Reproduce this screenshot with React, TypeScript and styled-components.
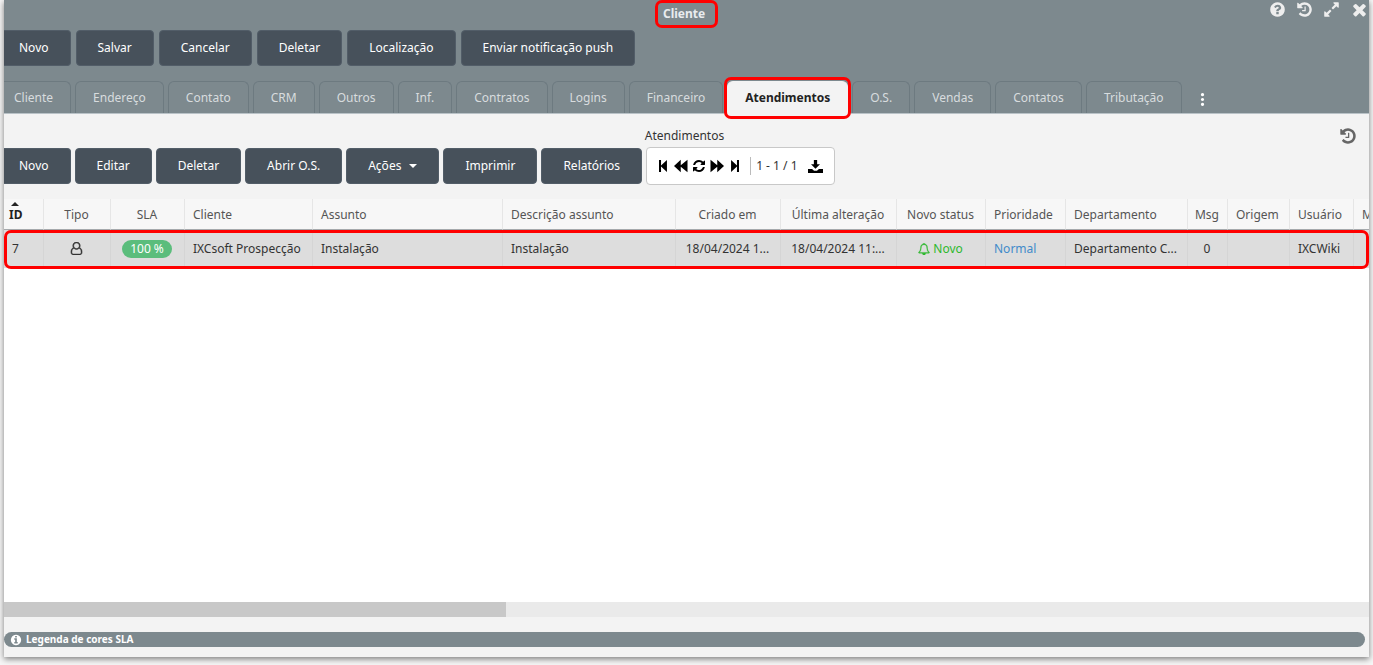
import React from 'react';
import styled, { createGlobalStyle, css } from 'styled-components';

const GlobalStyle = createGlobalStyle`
  * { box-sizing: border-box; }
  body {
    margin: 0;
    background: #f6f6f6;
    color: #333;
    font-family: "Noto Sans", "Open Sans", sans-serif;
    font-size: 12px;
    line-height: 16px;
    overflow: hidden;
  }
  button { font: inherit; border: 0; margin: 0; cursor: pointer; }
`;

const Page = styled.div`
  display: flex;
  min-height: 100vh;
  padding: 0 4px 8px;
`;

const Window = styled.main`
  flex: 1;
  min-width: 0;
  display: flex;
  flex-direction: column;
  background: #f3f3f3;
  box-shadow: 0 2px 6px rgba(0, 0, 0, 0.5);
`;

const Header = styled.header`
  background: #7d898e;
  border-bottom: 1px solid #b9c2c7;
`;

const TitleBar = styled.div`
  display: grid;
  grid-template-columns: 1fr auto 1fr;
  height: 30px;
  align-items: start;
`;

const Title = styled.h1`
  grid-column: 2;
  margin: 0;
  width: 63px;
  height: 28px;
  padding: 3px 5px;
  border: 3px solid #f00;
  border-radius: 7px;
  color: #e9ecee;
  font-size: 12px;
  line-height: 16px;
  white-space: nowrap;
`;

const WindowActions = styled.div`
  display: flex;
  justify-content: flex-end;
  gap: 10px;
`;

const IconButton = styled.button<{ $tone?: string }>`
  display: flex;
  align-items: center;
  justify-content: center;
  padding: 0;
  background: none;
  color: ${(p) => p.$tone || '#eee'};
`;

const Toolbar = styled.div<{ $gap?: number }>`
  display: flex;
  gap: ${(p) => p.$gap || 4}px;
  align-items: center;
`;

const ActionButton = styled.button`
  display: flex;
  align-items: center;
  gap: 8px;
  height: 36px;
  padding: 0 21px;
  border: 1px solid #525d68;
  border-radius: 4px;
  background: #47515b;
  color: #fff;
  white-space: nowrap;
  &:first-child {
    padding-left: 15px;
    border-left: 0;
    border-radius: 0 4px 4px 0;
  }
`;

const Caret = styled.span`
  border: 4px solid transparent;
  border-top-color: currentColor;
  border-bottom: 0;
`;

const Tabs = styled.nav`
  display: flex;
  gap: 4px;
  margin-top: 15px;
  height: 32px;
`;

const Tab = styled.button<{ $active?: boolean }>`
  position: relative;
  padding: 0 17px;
  border: 1px solid #6d7a80;
  border-bottom: 0;
  border-radius: 6px 6px 0 0;
  background: none;
  color: #d8dcde;
  white-space: nowrap;
  &:first-child {
    padding-left: 10px;
    border-left: 0;
    border-top-left-radius: 0;
  }
  ${(p) =>
    p.$active &&
    css`
      height: 33px;
      background: #f3f3f3;
      border-color: #f3f3f3;
      color: #222;
      font-weight: 700;
      &::after {
        content: '';
        position: absolute;
        inset: -5px -4px;
        border: 3px solid #f00;
        border-radius: 7px;
      }
    `}
`;

const MoreButton = styled(IconButton)`
  width: 34px;
  padding-top: 4px;
`;

const SubHeader = styled.div`
  display: grid;
  grid-template-columns: 1fr auto 1fr;
  align-items: center;
  height: 33px;
  padding: 10px 12px 0 8px;
`;

const SubTitle = styled.h2`
  grid-column: 2;
  margin: 0;
  font-size: 12px;
  font-weight: 400;
  line-height: 16px;
`;

const SubAction = styled.div`
  display: flex;
  justify-content: flex-end;
`;

const Pager = styled.div`
  display: flex;
  align-items: center;
  gap: 4px;
  height: 38px;
  padding: 0 11px 0 9px;
  border: 1px solid #c8c8c8;
  border-radius: 4px;
  background: #fff;
`;

const PageInfo = styled.span`
  display: flex;
  align-items: center;
  height: 18px;
  margin-left: 4px;
  padding: 0 6px 0 5px;
  border-left: 1px solid #bbb;
  white-space: nowrap;
`;

const GridArea = styled.section`
  position: relative;
  flex: 1;
  margin-top: 14px;
  overflow: hidden;
  background: #fff;
`;

const Grid = styled.table`
  table-layout: fixed;
  width: 1440px;
  border-collapse: separate;
  border-spacing: 0;
`;

const HeadCell = styled.th<{ $align?: string; $sorted?: boolean }>`
  position: relative;
  height: 31px;
  padding: 2px 7px 0 8px;
  border-right: 1px solid #e6e6e6;
  border-bottom: 1px solid #a5a9ac;
  background: #f7f7f7;
  color: ${(p) => (p.$sorted ? '#222' : '#555')};
  font-weight: ${(p) => (p.$sorted ? 700 : 400)};
  text-align: ${(p) => p.$align || 'left'};
  white-space: nowrap;
  ${(p) =>
    p.$align === 'center' &&
    css`
      padding-left: 6px;
    `}
  ${(p) =>
    p.$sorted &&
    css`
      padding-left: 5px;
      &::before {
        content: '';
        position: absolute;
        top: 3px;
        left: 7px;
        border: 4px solid transparent;
        border-bottom-color: #222;
        border-top: 0;
      }
    `}
`;

const Cell = styled.td<{ $align?: string; $tone?: string }>`
  height: 38px;
  padding: 0 7px 0 ${(p) => (p.$align === 'center' ? 6 : 8)}px;
  border-right: 1px solid #d5d5d5;
  background: #ddd;
  color: ${(p) => p.$tone || '#333'};
  text-align: ${(p) => p.$align || 'left'};
  white-space: nowrap;
  svg { vertical-align: -2px; }
`;

const Badge = styled.span`
  display: inline-block;
  padding: 1px 8px;
  border-radius: 9px;
  background: #5bbd7c;
  color: #fff;
`;

const RowHighlight = styled.div`
  position: absolute;
  top: 31px;
  left: 0;
  right: 0;
  height: 39px;
  border: 3px solid #f00;
  border-radius: 7px;
  pointer-events: none;
`;

const ScrollTrack = styled.div`
  height: 15px;
  background: #eaeaea;
`;

const ScrollThumb = styled.div`
  width: 36.8%;
  height: 100%;
  background: #c8c8c8;
`;

const Footer = styled.footer`
  padding: 15px 4px 10px 0;
`;

const Legend = styled.button`
  display: flex;
  align-items: center;
  gap: 4px;
  width: 100%;
  height: 15px;
  padding: 0 6px;
  border-radius: 8px;
  background: #7d898e;
  color: #fff;
  font-size: 10px;
  font-weight: 700;
  line-height: 15px;
`;

const circle =
  'q0 209-103 385.5t-279.5 279.5-385.5 103-385.5-103-279.5-279.5-103-385.5 103-385.5 279.5-279.5 385.5-103 385.5 103 279.5 279.5 103 385.5z';

const paths = {
  help:
    'M1024 1376v-192q0-14-9-23t-23-9h-192q-14 0-23 9t-9 23v192q0 14 9 23t23 9h192q14 0 23-9t9-23zm256-672q0-88-55.5-163t-138.5-116-170-41q-243 0-371 213-15 24 8 42l132 100q7 6 19 6 16 0 25-12 53-68 86-92 34-24 86-24 48 0 85.5 26t37.5 59q0 38-20 61t-68 45q-63 28-115.5 86.5t-52.5 125.5v36q0 14 9 23t23 9h192q14 0 23-9t9-23q0-19 21.5-49.5t54.5-49.5q32-18 49-28.5t46-35 44.5-48 28-60.5 12.5-81zm384 192' +
    circle,
  info:
    'M1152 1376v-160q0-14-9-23t-23-9h-96v-512q0-14-9-23t-23-9h-320q-14 0-23 9t-9 23v160q0 14 9 23t23 9h96v320h-96q-14 0-23 9t-9 23v160q0 14 9 23t23 9h448q14 0 23-9t9-23zm-128-896v-160q0-14-9-23t-23-9h-192q-14 0-23 9t-9 23v160q0 14 9 23t23 9h192q14 0 23-9t9-23zm640 416' +
    circle,
  history:
    'M1664 896q0 156-61 298t-164 245-245 164-298 61q-172 0-327-72.5t-264-204.5q-7-10-6.5-22.5t8.5-20.5l137-138q10-9 25-9 16 2 23 12 73 95 179 147t225 52q104 0 198.5-40.5t163.5-109.5 109.5-163.5 40.5-198.5-40.5-198.5-109.5-163.5-163.5-109.5-198.5-40.5q-98 0-188 35.5t-160 101.5l137 138q31 30 14 69-17 40-59 40h-448q-26 0-45-19t-19-45v-448q0-42 40-59 39-17 69 14l130 129q107-101 244.5-156.5t284.5-55.5q156 0 298 61t245 164 164 245 61 298zm-640-288v448q0 14-9 23t-23 9h-320q-14 0-23-9t-9-23v-64q0-14 9-23t23-9h224v-352q0-14 9-23t23-9h64q14 0 23 9t9 23z',
  expand:
    'M883 1056q0 13-10 23l-332 332 144 144q19 19 19 45t-19 45-45 19h-448q-26 0-45-19t-19-45v-448q0-26 19-45t45-19 45 19l144 144 332-332q10-10 23-10t23 10l114 114q10 10 10 23zm781-864v448q0 26-19 45t-45 19-45-19l-144-144-332 332q-10 10-23 10t-23-10l-114-114q-10-10-10-23t10-23l332-332-144-144q-19-19-19-45t19-45 45-19h448q26 0 45 19t19 45z',
  close:
    'M1490 1322q0 40-28 68l-136 136q-28 28-68 28t-68-28l-294-294-294 294q-28 28-68 28t-68-28l-136-136q-28-28-28-68t28-68l294-294-294-294q-28-28-28-68t28-68l136-136q28-28 68-28t68 28l294 294 294-294q28-28 68-28t68 28l136 136q28 28 28 68t-28 68l-294 294 294 294q28 28 28 68z',
  refresh:
    'M1639 1056q0 5-1 7-64 268-268 434.5t-478 166.5q-146 0-282.5-55t-243.5-157l-129 129q-19 19-45 19t-45-19-19-45v-448q0-26 19-45t45-19h448q26 0 45 19t19 45-19 45l-137 137q71 66 161 102t187 36q134 0 250-65t186-179q11-17 53-117 8-23 30-23h192q13 0 22.5 9.5t9.5 22.5zm25-800v448q0 26-19 45t-45 19h-448q-26 0-45-19t-19-45 19-45l138-138q-148-137-349-137-134 0-250 65t-186 179q-11 17-53 117-8 23-30 23h-199q-13 0-22.5-9.5t-9.5-22.5v-7q65-268 270-434.5t480-166.5q146 0 284 55.5t245 156.5l130-129q19-19 45-19t45 19 19 45z',
  first: 'M384 128h260v700L1400 128v1536L644 964v700H384z',
  prev: 'M0 896L864 96v700L1728 96v1600L864 996v700z',
  next: 'M1792 896L928 96v700L64 96v1600L928 996v700z',
  last: 'M1408 128h-260v700L392 128v1536l756-700v700h260z',
  download:
    'M700 128h392v500h340L896 1150 360 628h340zM0 1180h484l240 210h344l240-210h484v484H0z',
  user:
    'M1329 784q47 14 89.5 38t89 73 79.5 115.5 55 172 22 236.5q0 154-100 263.5t-241 109.5h-854q-141 0-241-109.5t-100-263.5q0-131 22-236.5t55-172 79.5-115.5 89-73 89.5-38q-79-125-79-272 0-104 40.5-198.5t109.5-163.5 163.5-109.5 198.5-40.5 198.5 40.5 163.5 109.5 109.5 163.5 40.5 198.5q0 147-79 272zm-433-656q-159 0-271.5 112.5t-112.5 271.5 112.5 271.5 271.5 112.5 271.5-112.5 112.5-271.5-112.5-271.5-271.5-112.5zm427 1536q88 0 150.5-71.5t62.5-173.5q0-239-78.5-377t-225.5-145q-145 127-336 127t-336-127q-147 7-225.5 145t-78.5 377q0 102 62.5 173.5t150.5 71.5h854z',
  bell:
    'M912 1696q0-16-16-16-59 0-101.5-42.5t-42.5-101.5q0-16-16-16t-16 16q0 73 51.5 124.5t124.5 51.5q16 0 16-16zm-666-288h1300q-266-300-266-832 0-51-24-105t-69-103-121.5-80.5-169.5-31.5-169.5 31.5-121.5 80.5-69 103-24 105q0 532-266 832zm1482 0q0 52-38 90t-90 38h-448q0 106-75 181t-181 75-181-75-75-181h-448q-52 0-90-38t-38-90q50-42 91-88t85-119.5 74.5-158.5 50-206 19.5-260q0-152 117-282.5t307-158.5q-8-19-8-39 0-40 28-68t68-28 68 28 28 68q0 20-8 39 190 28 307 158.5t117 282.5q0 139 19.5 260t50 206 74.5 158.5 85 119.5 91 88z',
  more:
    'M896 128a190 190 0 1 0 1 0zM896 706a190 190 0 1 0 1 0zM896 1284a190 190 0 1 0 1 0z',
};

function Icon({ name, size, weight = 0 }: { name: keyof typeof paths; size: number; weight?: number }) {
  return (
    <svg
      width={size}
      height={size}
      viewBox="0 0 1792 1792"
      fill="currentColor"
      stroke="currentColor"
      strokeWidth={weight}
      aria-hidden="true"
    >
      <path d={paths[name]} />
    </svg>
  );
}

const clientActions = ['Novo', 'Salvar', 'Cancelar', 'Deletar', 'Localização', 'Enviar notificação push'];

const tabs = [
  'Cliente', 'Endereço', 'Contato', 'CRM', 'Outros', 'Inf.', 'Contratos', 'Logins',
  'Financeiro', 'Atendimentos', 'O.S.', 'Vendas', 'Contatos', 'Tributação',
];

const gridActions = ['Novo', 'Editar', 'Deletar', 'Abrir O.S.', 'Ações', 'Imprimir', 'Relatórios'];

type Column = {
  title: string;
  width: number;
  align?: string;
  tone?: string;
  value: React.ReactNode;
};

const columns: Column[] = [
  { title: 'ID', width: 40, value: '7' },
  { title: 'Tipo', width: 67, align: 'center', value: <Icon name="user" size={13} weight={70} /> },
  { title: 'SLA', width: 74, align: 'center', value: <Badge>100 %</Badge> },
  { title: 'Cliente', width: 128, value: 'IXCsoft Prospecção' },
  { title: 'Assunto', width: 190, value: 'Instalação' },
  { title: 'Descrição assunto', width: 173, value: 'Instalação' },
  { title: 'Criado em', width: 105, align: 'center', value: '18/04/2024 1...' },
  { title: 'Última alteração', width: 116, align: 'center', value: '18/04/2024 11:...' },
  {
    title: 'Novo status', width: 89, align: 'center', tone: '#2eb82e',
    value: <><Icon name="bell" size={12} weight={50} /> Novo</>,
  },
  { title: 'Prioridade', width: 80, tone: '#428bca', value: 'Normal' },
  { title: 'Departamento', width: 122, value: 'Departamento C...' },
  { title: 'Msg', width: 40, align: 'center', value: '0' },
  { title: 'Origem', width: 62, value: '' },
  { title: 'Usuário', width: 64, value: 'IXCWiki' },
  { title: 'Mensagem', width: 90, value: '' },
];

const pagerButtons: { name: keyof typeof paths; label: string }[] = [
  { name: 'first', label: 'Primeira página' },
  { name: 'prev', label: 'Página anterior' },
  { name: 'refresh', label: 'Atualizar' },
  { name: 'next', label: 'Próxima página' },
  { name: 'last', label: 'Última página' },
];

export default function App() {
  return (
    <>
      <GlobalStyle />
      <Page>
        <Window>
          <Header>
            <TitleBar>
              <Title>Cliente</Title>
              <WindowActions>
                <IconButton aria-label="Ajuda"><Icon name="help" size={17} /></IconButton>
                <IconButton aria-label="Histórico"><Icon name="history" size={17} /></IconButton>
                <IconButton aria-label="Expandir"><Icon name="expand" size={17} /></IconButton>
                <IconButton aria-label="Fechar"><Icon name="close" size={19} /></IconButton>
              </WindowActions>
            </TitleBar>
            <Toolbar $gap={5}>
              {clientActions.map((label) => (
                <ActionButton key={label}>{label}</ActionButton>
              ))}
            </Toolbar>
            <Tabs>
              {tabs.map((label) => (
                <Tab key={label} $active={label === 'Atendimentos'}>{label}</Tab>
              ))}
              <MoreButton aria-label="Mais abas" $tone="#fff"><Icon name="more" size={15} /></MoreButton>
            </Tabs>
          </Header>

          <SubHeader>
            <SubTitle>Atendimentos</SubTitle>
            <SubAction>
              <IconButton aria-label="Histórico de atendimentos" $tone="#666"><Icon name="history" size={18} /></IconButton>
            </SubAction>
          </SubHeader>

          <Toolbar>
            {gridActions.map((label) => (
              <ActionButton key={label}>
                {label}
                {label === 'Ações' && <Caret />}
              </ActionButton>
            ))}
            <Pager>
              {pagerButtons.map(({ name, label }) => (
                <IconButton key={name} aria-label={label} $tone="#000"><Icon name={name} size={14} /></IconButton>
              ))}
              <PageInfo>1 - 1 / 1</PageInfo>
              <IconButton aria-label="Exportar" $tone="#000"><Icon name="download" size={15} /></IconButton>
            </Pager>
          </Toolbar>

          <GridArea>
            <Grid>
              <colgroup>
                {columns.map((c) => (
                  <col key={c.title} width={c.width} />
                ))}
              </colgroup>
              <thead>
                <tr>
                  {columns.map((c) => (
                    <HeadCell key={c.title} $align={c.align} $sorted={c.title === 'ID'}>{c.title}</HeadCell>
                  ))}
                </tr>
              </thead>
              <tbody>
                <tr>
                  {columns.map((c) => (
                    <Cell key={c.title} $align={c.align} $tone={c.tone}>{c.value}</Cell>
                  ))}
                </tr>
              </tbody>
            </Grid>
            <RowHighlight />
          </GridArea>
          <ScrollTrack>
            <ScrollThumb />
          </ScrollTrack>

          <Footer>
            <Legend>
              <Icon name="info" size={12} />
              Legenda de cores SLA
            </Legend>
          </Footer>
        </Window>
      </Page>
    </>
  );
}
